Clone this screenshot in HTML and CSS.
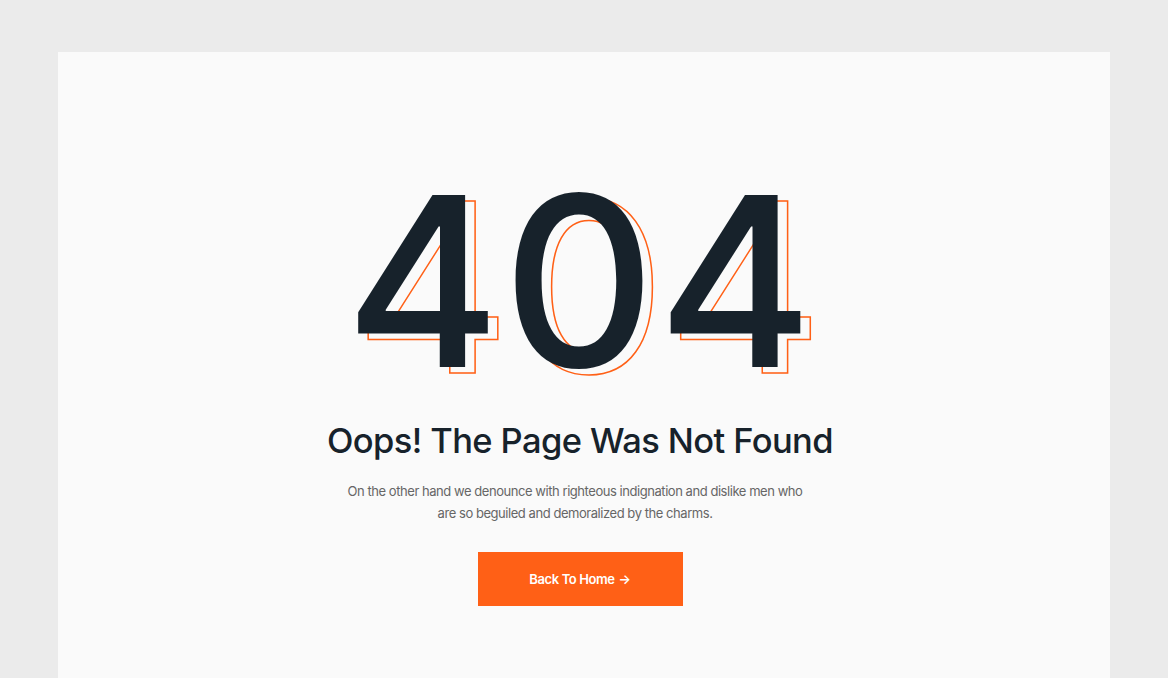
FILE: index.html
```html
<!DOCTYPE html>
<html>
<head>
    <meta charset="UTF-8">
    <title>404 - Page Not Found</title>
    <link rel="stylesheet" href="styles.css">
</head>
<body>
    <div class="page">
        <div class="error-card">
            <h1 class="error-code" data-text="404">404</h1>
            <h2 class="error-title">Oops! The Page Was Not Found</h2>
            <p class="error-text">On the other hand we denounce with righteous indignation and dislike men who are so beguiled and demoralized by the charms.</p>
            <a href="#" class="home-btn">Back To Home <span class="arrow">&rarr;</span></a>
        </div>
    </div>
</body>
</html>
```

FILE: styles.css
```css
body {
    margin: 0;
    padding: 0;
    background-color: #ebebeb;
    font-family: Inter, "Noto Sans", sans-serif;
}

.page {
    padding: 52px 58px 0 58px;
}

.error-card {
    background-color: #fafafa;
    min-height: 626px;
    padding: 110px 8px 0 0;
    display: flex;
    flex-direction: column;
    align-items: center;
    box-sizing: border-box;
}

.error-code {
    position: relative;
    z-index: 0;
    margin: 0;
    font-size: 237px;
    line-height: 1;
    font-weight: 500;
    color: #17222b;
    letter-spacing: 2px;
}

.error-code::before {
    content: attr(data-text);
    position: absolute;
    left: 10px;
    top: 6px;
    color: transparent;
    -webkit-text-stroke: 1.5px #ff6016;
    z-index: -1;
}

.error-title {
    margin: 21px 0 0 0;
    font-size: 34.5px;
    line-height: 1.2;
    font-weight: 500;
    color: #17222b;
    letter-spacing: -0.6px;
}

.error-text {
    margin: 19px 10px 0 0;
    max-width: 470px;
    text-align: center;
    font-size: 13px;
    line-height: 22px;
    color: #666666;
    letter-spacing: -0.45px;
}

.home-btn {
    margin-top: 28px;
    width: 205px;
    height: 54px;
    display: flex;
    align-items: center;
    justify-content: center;
    gap: 4px;
    background-color: #ff6016;
    color: white;
    font-size: 13px;
    font-weight: 600;
    text-decoration: none;
    letter-spacing: -0.4px;
}
```
